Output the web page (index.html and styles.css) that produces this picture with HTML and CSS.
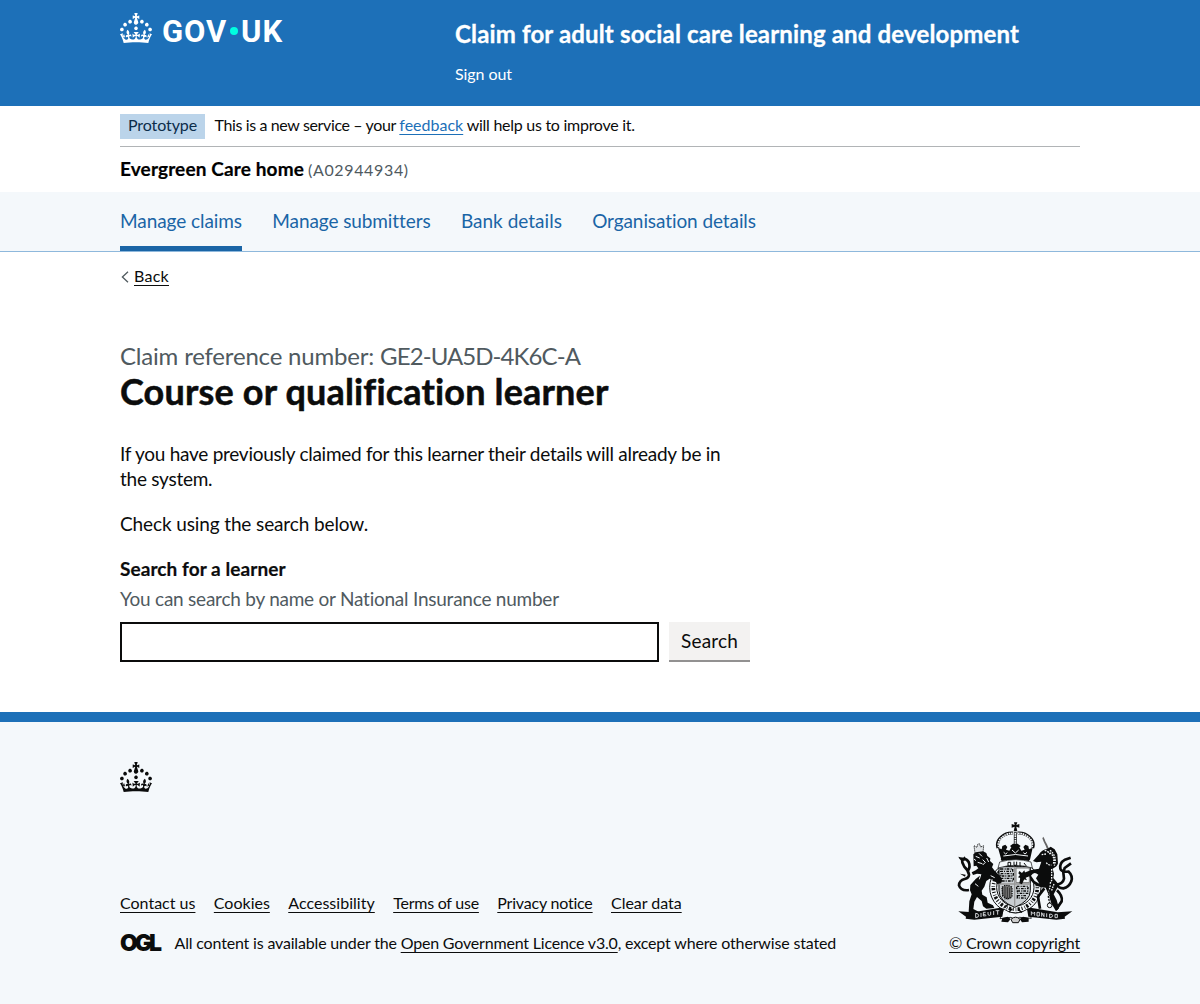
FILE: index.html
```html
<!DOCTYPE html>
<html lang="en">
<head>
<meta charset="utf-8">
<title>Course or qualification learner</title>
<link rel="stylesheet" href="styles.css">
</head>
<body>
<svg width="0" height="0" class="defs" aria-hidden="true">
  <symbol id="crown" viewBox="0 0 32 30"><path d="M22.6 10.4c-1 .4-2-.1-2.4-1-.4-.9.1-2 1-2.4.9-.4 2 .1 2.4 1s-.1 2-1 2.4m-5.9 6.7c-.9.4-2-.1-2.4-1-.4-.9.1-2 1-2.4.9-.4 2 .1 2.4 1s-.1 2-1 2.4m10.8-3.7c-1 .4-2-.1-2.4-1-.4-.9.1-2 1-2.4.9-.4 2 .1 2.4 1s0 2-1 2.4m3.3 4.8c-1 .4-2-.1-2.4-1-.4-.9.1-2 1-2.4.9-.4 2 .1 2.4 1s-.1 2-1 2.4M17 4.7l2.3 1.2V2.5l-2.3.7-.2-.2.9-3h-3.4l.9 3-.2.2c-.1.1-2.3-.7-2.3-.7v3.4L15 4.7c.1.1.1.2.2.2l-1.3 4c-.1.2-.1.4-.1.6 0 1.1.8 2 1.9 2.2h.7c1-.2 1.9-1.1 1.9-2.1 0-.2 0-.4-.1-.6l-1.3-4c-.1-.2 0-.2.1-.3m-7.6 5.7c.9.4 2-.1 2.4-1 .4-.9-.1-2-1-2.4-.9-.4-2 .1-2.4 1s0 2 1 2.4m-5 3c.9.4 2-.1 2.4-1 .4-.9-.1-2-1-2.4-.9-.4-2 .1-2.4 1s.1 2 1 2.4m-3.2 4.8c.9.4 2-.1 2.4-1 .4-.9-.1-2-1-2.4-.9-.4-2 .1-2.4 1s0 2 1 2.4m14.8 11c4.4 0 8.6.3 12.3.8 1.1-4.5 2.4-7 3.7-8.8l-2.5-.9c.2 1.3.3 1.9 0 2.7-.4-.4-.8-1.1-1.1-2.3l-1.2 4c.7-.5 1.3-.8 2-.9-1.1 2.5-2.6 3.1-3.5 3-1.1-.2-1.7-1.2-1.5-2.1.3-1.2 1.5-1.5 2.1-.1 1.1-2.3-.8-3-2-2.3 1.9-1.9 2.1-3.5.6-5.6-2.1 1.6-2.1 3.2-1.2 5.5-1.2-1.4-3.2-.6-2.5 1.6.9-1.4 2.1-.5 1.9.8-.2 1.1-1.7 2.1-3.5 1.9-2.7-.2-2.9-2.1-2.9-3.6.7-.1 1.9.5 2.9 1.9l.4-4.3c-1.1 1.1-2.1 1.4-3.2 1.4.4-1.2 2.1-3 2.1-3h-5.4s1.7 1.9 2.1 3c-1.1 0-2.1-.2-3.2-1.4l.4 4.3c1-1.4 2.2-2 2.9-1.9-.1 1.5-.2 3.4-2.9 3.6-1.9.2-3.4-.8-3.5-1.9-.2-1.3 1-2.2 1.9-.8.7-2.3-1.2-3-2.5-1.6.9-2.2.9-3.9-1.2-5.5-1.5 2-1.3 3.7.6 5.6-1.2-.7-3.1 0-2 2.3.6-1.4 1.8-1.1 2.1.1.2.9-.3 1.9-1.5 2.1-.9.2-2.4-.5-3.5-3 .6 0 1.2.3 2 .9l-1.2-4c-.3 1.1-.7 1.9-1.1 2.3-.3-.8-.2-1.4 0-2.7l-2.9.9C1.3 23 2.6 25.5 3.7 30c3.7-.5 7.9-.8 12.3-.8"/></symbol>
</svg>

<header class="header">
  <div class="container header-row">
    <a class="logo" href="#">
      <svg class="logo-crown" width="32" height="30"><use href="#crown"/></svg>
      <span class="logo-gov">GOV</span><span class="logo-dot"></span><span class="logo-uk">UK</span>
    </a>
    <div class="header-content">
      <a class="service-name" href="#">Claim for adult social care learning and development</a>
      <a class="sign-out" href="#">Sign out</a>
    </div>
  </div>
</header>

<div class="container">
  <div class="phase">
    <strong class="tag">Prototype</strong>
    <span class="phase-text"><span class="phase-start">This is a new service – your </span><a class="link" href="#">feedback</a><span class="phase-end"> will help us to improve it.</span></span>
  </div>
  <div class="org"><strong class="org-name">Evergreen Care home</strong><span class="org-id">(A02944934)</span></div>
</div>

<nav class="nav">
  <div class="container nav-list">
    <a class="nav-link current" href="#">Manage claims</a>
    <a class="nav-link submitters" href="#">Manage submitters</a>
    <a class="nav-link bank" href="#">Bank details</a>
    <a class="nav-link organisation" href="#">Organisation details</a>
  </div>
</nav>

<main class="container main">
  <a class="back" href="#"><svg class="back-icon" width="8" height="12" viewBox="0 0 8 12"><path d="M7 .8 1.400 6 7 11.200" fill="none" stroke="#505a5f" stroke-width="1.300"/></svg><span class="back-text">Back</span></a>
  <div class="column">
    <span class="caption">Claim reference number: <span class="reference">GE2-UA5D-4K6C-A</span></span>
    <h1 class="title">Course or qualification learner</h1>
    <p class="body intro">If you have previously claimed for this learner their details will already be in the system.</p>
    <p class="body check">Check using the search below.</p>
    <label class="label" for="search">Search for a learner</label>
    <div class="hint">You can search by name or National Insurance number</div>
    <div class="search-row">
      <input class="input" id="search" type="text">
      <button class="button">Search</button>
    </div>
  </div>
</main>

<footer class="footer">
  <div class="container">
    <svg class="footer-crown" width="32" height="30"><use href="#crown"/></svg>
    <div class="footer-meta">
      <div class="footer-main">
        <div class="footer-links">
          <a class="f1" href="#">Contact us</a>
          <a class="f2" href="#">Cookies</a>
          <a class="f3" href="#">Accessibility</a>
          <a class="f4" href="#">Terms of use</a>
          <a class="f5" href="#">Privacy notice</a>
          <a class="f6" href="#">Clear data</a>
        </div>
        <div class="licence">
          <span class="ogl">OGL</span>
          <span class="licence-text"><span class="lic-a">All content is available under the </span><a class="lic-b" href="#">Open Government Licence v3.0</a><span class="lic-c">, except where otherwise stated</span></span>
        </div>
      </div>
      <a class="copyright" href="#">
        <svg class="arms" width="125" height="102" viewBox="22 21 375 306" fill="#0b0c0c">
          <!-- shield and garter -->
          <circle cx="212" cy="217" r="77" fill="#f4f8fb" stroke="#0b0c0c" stroke-width="3"/>
          <circle cx="212" cy="217" r="66" fill="none" stroke="#0b0c0c" stroke-width="11" stroke-dasharray="3 5 7 4 2 6"/>
          <circle cx="212" cy="217" r="56" fill="#f4f8fb" stroke="#0b0c0c" stroke-width="3"/>
          <path d="M163 155h94v72q0 31-47 50-47-19-47-50z" fill="#c9ced2" stroke="#0b0c0c" stroke-width="3"/>
          <path d="M214 159h40v44h-40z" fill="#f4f8fb" stroke="#777" stroke-width="3"/>
          <path d="M224 168l8 6 7-8 3 10 8 3-9 6 6 11-12-4-6 7-2-10-7-2 6-7-5-5z"/>
          <path d="M168 162h36v7h-36zM168 176h38v7h-38zM168 190h38v8h-38zM216 214h34v7h-34zM218 228h31v7h-31zM218 242h24v7h-24z" fill="none" stroke="#0b0c0c" stroke-width="4" stroke-dasharray="8 4 3 3"/>
          <path d="M172 217q14-12 30 0v28q-14 14-28-4z" fill="#777" stroke="#0b0c0c" stroke-width="4" stroke-dasharray="4 3"/>
          <path d="M174 220v26M181 216v38M188 216v38M195 218v32" stroke="#0b0c0c" stroke-width="2"/>
          <path d="M210 155v120M163 207h94" stroke="#999" stroke-width="4"/>
          <!-- royal crown -->
          <path d="M208 22h10l-3 8 9-3v11l-9-3 3 14h-11l3-14-9 3V27l9 3z"/>
          <path d="M212 52v54M205 54c-25-2-54 19-45 45M219 54c25-2 54 19 45 45" fill="none" stroke="#0b0c0c" stroke-width="9"/>
          <path d="M212 54v48M204 55c-23-1-49 19-42 41M220 55c23-1 49 19 42 41" fill="none" stroke="#f4f8fb" stroke-width="5" stroke-dasharray="5 2"/>
          <path d="M160 98l11 5 2-10 9-4 6 7-4 8 10 3 6-10-4-4 9-7h14l9 7-4 4 6 10 10-3-4-8 6-7 9 4 2 10 11-5-8 36q-44-8-86 0z"/>
          <path d="M177 112l6 5 5-4M202 105l10 9 10-9M236 113l5 4 6-5M176 123q36-9 74 0" fill="none" stroke="#f4f8fb" stroke-width="3"/>
          <path d="M168 132q44-9 88 0l-3 6q-42-8-82 0z"/>
          <path d="M165 141q48-14 94 0l4 18q-50-16-103 0z" fill="#f4f8fb" stroke="#0b0c0c" stroke-width="2"/>
          <path d="M190 142v11h8v-11zM208 140v11h8v-11M226 141v12M238 144l7 9" fill="none" stroke="#0b0c0c" stroke-width="3"/>
          <!-- lion -->
          <path d="M88 92l9 5 2-9 5-2 4 10 9-4-2 20q-14 8-24 3z" fill="#dfe3e6" stroke="#0b0c0c" stroke-width="2.500" stroke-dasharray="4 2"/>
          <path d="M86 118l7-6 22-3 10 5 3 9 9 7-1 8 10 9-4 10 9 12 16 14 6 14-4 8-12 2-6-11-16-5-10 7-6 17-8 12 2 12 13 8 3 16 16 8 4 8-24 2-10-7-4-16-14-12-8 14-3 22 16 8 5 8-26 2-9-10 2-31 7-21-5-12 1-16 16-18 18-14-14-2-12 4-4-8 12-6 8-6-6-8-8 2z"/>
          <path d="M73 225q-24 4-30-14 1-15 17-19 13-4 13-13-1-12-14-24-8-11-7-23 14-2 20 9 6 14-2 26" fill="none" stroke="#0b0c0c" stroke-width="8"/>
          <path d="M52 139l-8-8-3-6 15 4 4-5 5 10zM61 185l-15-9 17 3z"/>
          <path d="M93 124l12 5M103 115l9 9M114 134l8 8-8 8M126 129l6 12M108 180l-4 13M99 142l14 4M91 206l10 8M138 182l12 6M88 132l6 5" fill="none" stroke="#f4f8fb" stroke-width="3"/>
          <!-- unicorn -->
          <path d="M296 65l4 8 2 6 5 9 6 13-5 4-5-13-6-12-4-10z" fill="#666"/>
          <path d="M282 119q9-15 26-17l10-7 12 8 8 15 2 27q-3 11-16 16l4 15-2 13 12 14-1 17-10 18 9 17 7 25-9 9-14-24-8-25-9-22q-29-1-44-21l-5-13-14 6-8 18-8-3 3-17 15-16 21-8 20-3 7-21-15 2-10-4z"/>
          <path d="M291 119l13-2M308 110q25 9 18 38M316 106q22 17 13 46M305 143q5 8 15 7M300 106q14 4 18 14M321 162v34l-6 12M328 207l-8 22M317 211q-7 26-3 59" fill="none" stroke="#f4f8fb" stroke-width="4" stroke-dasharray="5 3"/>
          <path d="M259 182q9-15 22-3l-7 11 10 16-14-8z" fill="#f4f8fb"/>
          <path d="M336 209q19-4 22-18l-2-18 4-14 19-14M378 128l-17 6q-17 10-14 27 3 11 25 9 13 12 8 29-7 18-24 21-16-1-19-12M337 226q18 17 14 33l-16 24M299 220l-19 25 6 36" fill="none" stroke="#0b0c0c" stroke-width="8"/>
          <path d="M315 225l-4 20 6 28" fill="none" stroke="#0b0c0c" stroke-width="4" stroke-dasharray="6 3"/>
          <circle cx="315" cy="271" r="7" fill="#f4f8fb" stroke="#0b0c0c" stroke-width="3"/>
          <!-- compartment and motto ribbon -->
          <path d="M177 282q35 25 72 0l11 28-35-3-13 7-13-7-33 4z" fill="#f4f8fb" stroke="#0b0c0c" stroke-width="2.500"/>
          <path d="M173 309l16-4 9 7-8 10-20-2zM225 312l10-7 17 4 0 11-20 2z"/>
          <path d="M199 313q14-13 27 0l-5 10h-17z" fill="#ccc" stroke="#0b0c0c" stroke-width="3"/>
          <path d="M180 278l10-10M193 291l10-10M220 284l12 8" stroke="#0b0c0c" stroke-width="4"/>
          <path d="M41 289l44 3 82-14 10 3-4 24-84 9-26-3 1-6z"/>
          <path d="M383 289l-44 3-82-14-10 3 4 24 84 9 26-3-1-6z"/>
          <path d="M93 295v13q10-1 9-7t-9-6M109 294v12M123 292h-7v11l9-1M116 298h7M130 291v8q5 4 8 0v-9M147 288v12M153 287h11M159 287v12M260 301v-11l5 6 5-5v11M277 292h7v11h-7zM291 305v-12l7 12v-11M306 295v11M315 297v11q9-1 9-6t-9-5M331 298h7v10h-7z" fill="none" stroke="#f4f8fb" stroke-width="2.500"/>
        </svg>
        <span class="copyright-text">© Crown copyright</span>
      </a>
    </div>
  </div>
</footer>
</body>
</html>
```
FILE: styles.css
```css
* { box-sizing: border-box; }
body { margin: 0; background: #fff; color: #0b0c0c; font-family: Lato, "Liberation Sans", sans-serif; font-size: 16px; line-height: 20px; font-kerning: normal; }
a { color: inherit; }
.defs { display: block; }
.container { width: 960px; margin: 0 auto; }

.header { height: 106px; background: #1d70b8; color: #fff; }
.header a { text-decoration: none; }
.header-row { display: flex; }
.logo { display: flex; width: 335px; height: 60px; padding-top: 13px; font: 700 31px/38px Roboto, Arial, sans-serif; }
.logo-crown { fill: #fff; margin-right: 10px; }
.logo-gov { width: 67px; letter-spacing: .9px; }
.logo-dot { width: 8px; height: 8px; margin: 14px 3.500px 0 .5px; border-radius: 50%; background: #00ffe0; }
.logo-uk { letter-spacing: 1px; }
.header-content { display: flex; flex-direction: column; align-items: flex-start; padding-top: 19px; }
.service-name { font-size: 24px; font-weight: 700; line-height: 30px; letter-spacing: .155px; white-space: nowrap; -webkit-text-stroke: .3px; }
.sign-out { margin-top: 13px; line-height: 24px; letter-spacing: -.06px; }

.phase { display: flex; height: 41px; padding-top: 8px; border-bottom: 1px solid #b1b4b6; }
.tag { width: 85px; height: 25px; margin-right: 9.500px; padding-left: 8px; background: #bbd4ea; color: #0c2d4a; font-weight: 400; line-height: 22px; letter-spacing: -.1px; }
.phase-text { line-height: 22px; white-space: pre; }
.phase-start { letter-spacing: -.37px; }
.phase-end { letter-spacing: -.27px; }
.link { color: #1d70b8; text-underline-offset: 3px; text-decoration-skip-ink: none; }
.org { height: 45px; padding-top: 7px; line-height: 30px; }
.org-name { margin-right: 4px; font-size: 19px; letter-spacing: .137px; color: #000; -webkit-text-stroke: .2px; }
.org-id { color: #505a5f; letter-spacing: .65px; }

.nav { height: 60px; background: #f4f8fb; border-bottom: 1px solid #8eb8dc; }
.nav-list { display: flex; gap: 30.300px; }
.nav-link { height: 59px; color: #1a65a6; font-size: 19px; line-height: 57px; letter-spacing: -.068px; text-decoration: none; }
.current { border-bottom: 5px solid #1a65a6; }
.submitters { letter-spacing: -.09px; }
.bank { letter-spacing: .015px; }
.organisation { letter-spacing: -.09px; }

.main { padding-top: 14px; padding-bottom: 50px; }
.back { display: flex; align-items: center; height: 20px; gap: 5px; padding-left: 1px; text-decoration: none; }
.back-icon { margin-top: 2px; }
.back-text { letter-spacing: .26px; text-decoration: underline; text-underline-offset: 3px; text-decoration-skip-ink: none; }
.column { width: 630px; padding-top: 55px; }
.caption { display: block; height: 30px; color: #505a5f; font-size: 24px; line-height: 30px; letter-spacing: -.19px; }
.reference { letter-spacing: -.92px; }
.title { margin: 0 0 30px; font-size: 36px; font-weight: 700; line-height: 40px; letter-spacing: .17px; -webkit-text-stroke: .5px; }
.body { margin: 0 0 20px; font-size: 19px; line-height: 25px; }
.intro { padding-right: 25px; letter-spacing: -.262px; }
.check { letter-spacing: -.12px; }
.label { display: block; margin-bottom: 5px; font-size: 19px; font-weight: 700; line-height: 25px; letter-spacing: .077px; -webkit-text-stroke: .2px; }
.hint { margin-bottom: 11px; color: #505a5f; font-size: 19px; line-height: 25px; letter-spacing: -.234px; }
.search-row { display: flex; gap: 10px; }
.input { width: 539px; height: 40px; padding: 5px; border: 2px solid #0b0c0c; border-radius: 0; background: #fff; font: inherit; }
.button { width: 81px; height: 40px; padding: 0; border: 0; border-bottom: 2px solid #929191; border-radius: 0; background: #f3f2f1; color: #0b0c0c; font: 400 19px/38px Lato, sans-serif; letter-spacing: .18px; }

.footer { height: 292px; padding-top: 40px; border-top: 10px solid #1d70b8; background: #f4f8fb; }
.footer a { text-underline-offset: 3px; text-decoration-skip-ink: none; }
.footer-crown { display: block; margin-bottom: 30px; fill: #0b0c0c; }
.footer-meta { display: flex; justify-content: space-between; align-items: flex-end; height: 131px; }
.footer-links { display: flex; gap: 18.400px; margin-bottom: 20px; white-space: nowrap; }
.f3 { letter-spacing: .03px; }
.f4 { letter-spacing: -.237px; }
.f5 { letter-spacing: -.199px; }
.f6 { letter-spacing: -.028px; }
.licence { display: flex; height: 20px; }
.ogl { width: 54.500px; font: 900 23px/20px Inter, sans-serif; letter-spacing: -3.100px; }
.licence-text { white-space: pre; }
.lic-a { letter-spacing: -.172px; }
.lic-b { letter-spacing: -.185px; }
.lic-c { letter-spacing: -.16px; }
.copyright { display: flex; flex-direction: column; align-items: center; width: 131px; }
.arms { margin-bottom: 9px; }
.copyright-text { letter-spacing: -.188px; white-space: nowrap; }
```
